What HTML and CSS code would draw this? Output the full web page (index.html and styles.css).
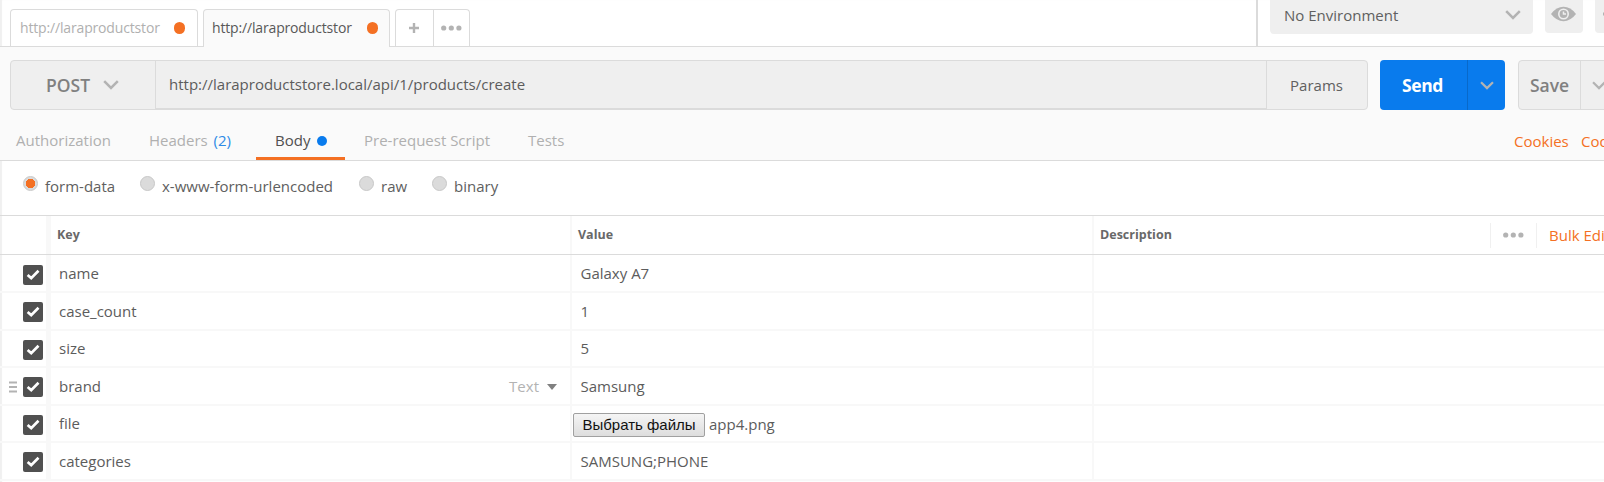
FILE: index.html
```html
<!DOCTYPE html>
<html lang="en">
<head>
<meta charset="utf-8">
<title>Request builder</title>
<link rel="stylesheet" href="styles.css">
</head>
<body>
<svg class="defs" width="0" height="0">
<symbol id="chev" viewBox="0 0 16 10"><path d="M1.200 1.200 8 8l6.800-6.800" fill="none" stroke="currentColor" stroke-width="2.500"/></symbol>
<symbol id="dots" viewBox="0 0 21 6"><g fill="currentColor"><circle cx="2.700" cy="3" r="2.600"/><circle cx="10.300" cy="3" r="2.600"/><circle cx="17.900" cy="3" r="2.600"/></g></symbol>
<symbol id="check" viewBox="0 0 20 20"><path d="M4.600 10 8.200 13.100 15.500 5.700" fill="none" stroke="#fff" stroke-width="2.700"/></symbol>
</svg>
<div class="app">
<header class="top">
  <div class="tabs">
    <div class="tab"><span class="tab-name">http://laraproductstor</span><i class="dot"></i></div>
    <div class="tab active"><span class="tab-name">http://laraproductstor</span><i class="dot"></i></div>
    <div class="tab-tools"><span class="tool"><svg width="10" height="10"><path d="M5 0v10M0 5h10" stroke="#b3b3b3" stroke-width="2.400"/></svg></span><span class="tool"><svg width="21" height="6"><use href="#dots"/></svg></span></div>
  </div>
  <div class="env">
    <div class="select"><span>No Environment</span><svg width="16" height="10"><use href="#chev"/></svg></div>
    <div class="square"><svg width="25" height="16" viewBox="0 0 25 16"><path d="M0 8Q5.500.8 12.500.8T25 8Q19.500 15.200 12.500 15.200T0 8Z" fill="#b3b3b3"/><circle cx="12.500" cy="8" r="4.700" fill="none" stroke="#efefef" stroke-width="1.600"/><path d="M12.500 5.500V8H15" fill="none" stroke="#efefef" stroke-width="1.500"/></svg></div>
    <div class="square cog"><svg width="18" height="18" viewBox="0 0 18 18"><circle cx="9" cy="9" r="5" fill="none" stroke="#b3b3b3" stroke-width="3"/><path d="M0 9h3M15 9h3M9 0v3M9 15v3" stroke="#b3b3b3" stroke-width="3"/></svg></div>
  </div>
</header>
<section class="request">
  <div class="bar">
    <div class="method"><b>POST</b><svg width="16" height="10"><use href="#chev"/></svg></div>
    <div class="url">http://laraproductstore.local/api/1/products/create</div>
    <div class="params">Params</div>
  </div>
  <div class="send"><b>Send</b><span class="drop"><svg width="14" height="9"><use href="#chev"/></svg></span></div>
  <div class="save"><b>Save</b><span class="drop"><svg width="14" height="9"><use href="#chev"/></svg></span></div>
</section>
<nav class="sections">
  <span class="sec auth">Authorization</span>
  <span class="sec headers">Headers <em>(2)</em></span>
  <span class="sec body">Body<i></i></span>
  <span class="sec script">Pre-request Script</span>
  <span class="sec tests">Tests</span>
  <span class="links"><a>Cookies</a><a>Code</a></span>
</nav>
<div class="modes">
  <label class="m1"><i class="on"></i><span>form-data</span></label>
  <label class="m2"><i></i><span>x-www-form-urlencoded</span></label>
  <label class="m3"><i></i><span>raw</span></label>
  <label class="m4"><i></i><span>binary</span></label>
</div>
<main class="table">
  <div class="row head">
    <div class="c0"></div><div class="key">Key</div><div class="val">Value</div>
    <div class="desc"><span class="dlabel">Description</span><span class="more"><svg width="21" height="6"><use href="#dots"/></svg></span><span class="bulk">Bulk Edit</span></div>
  </div>
  <div class="row tall first"><div class="c0"><svg class="box"><use href="#check"/></svg></div><div class="key">name</div><div class="val">Galaxy A7</div><div class="desc"></div></div>
  <div class="row tall"><div class="c0"><svg class="box"><use href="#check"/></svg></div><div class="key">case_count</div><div class="val">1</div><div class="desc"></div></div>
  <div class="row up"><div class="c0"><svg class="box"><use href="#check"/></svg></div><div class="key">size</div><div class="val">5</div><div class="desc"></div></div>
  <div class="row tall"><div class="c0"><svg class="grip" width="8" height="12"><path d="M0 1.500h8M0 6h8M0 10.500h8" stroke="#b3b3b3" stroke-width="2"/></svg><svg class="box"><use href="#check"/></svg></div><div class="key">brand<span class="type">Text<svg width="10" height="6"><path d="M0 0h10L5 6Z" fill="#808080"/></svg></span></div><div class="val">Samsung</div><div class="desc"></div></div>
  <div class="row up"><div class="c0"><svg class="box"><use href="#check"/></svg></div><div class="key">file</div><div class="val file"><span class="choose">Выбрать файлы</span><span>app4.png</span></div><div class="desc"></div></div>
  <div class="row tall"><div class="c0"><svg class="box"><use href="#check"/></svg></div><div class="key">categories</div><div class="val">SAMSUNG;PHONE</div><div class="desc"></div></div>
</main>
</div>
</body>
</html>
```
FILE: styles.css
```css
*{box-sizing:border-box}
body{margin:0;background:#fff;color:#5c5c5c;font:15px/20px "Open Sans","Noto Sans",sans-serif}
.defs{position:absolute}
svg{display:block;flex:none}
.app{width:1604px;height:482px;overflow:hidden;box-shadow:inset 2px 0 1px #f0f0f0}
.top{display:flex;height:47px;border-bottom:1px solid #dbdbdb}
.tabs{display:flex;width:1256px;padding:9px 0 0 10px;flex:none}
.tab{display:flex;align-items:center;width:188px;height:37px;margin-right:5px;padding:0 12px 0 9px;border:1px solid #dbdbdb;border-bottom:0;border-radius:4px 4px 0 0;color:#b0b0b0}
.tab.active{width:187px;height:38px;padding:0 11px 1px 8px;background:#fafafa;color:#585858}
.tab-name{white-space:nowrap;font-size:14px;letter-spacing:-.16px}
.dot{width:11px;height:12px;margin-left:auto;border-radius:6px;background:#f47023}
.tab-tools{display:flex;width:75px;height:37px;border:1px solid #dbdbdb;border-bottom:0;border-radius:4px 4px 0 0;color:#b3b3b3}
.tool{display:grid;place-items:center;width:36px}
.tool:first-child{width:38px;border-right:1px solid #dbdbdb}
.env{display:flex;width:348px;padding-left:12px;border-left:2px solid #dbdbdb;color:#b3b3b3}
.select{display:flex;align-items:center;justify-content:space-between;width:263px;height:34px;padding:0 12px 4px 14px;border-radius:0 0 4px 4px;background:#efefef;flex:none}
.select span{color:#606060}
.square{display:grid;place-items:center;width:38px;height:33px;margin-left:12px;padding:0 1px 5px 0;border-radius:0 0 4px 4px;background:#efefef;flex:none}
.cog{place-items:center start;padding-left:8px}
.request{display:flex;height:77px;padding:13px 0 0 10px;background:#fafafa}
.bar{display:flex;width:1358px;height:50px;border:1px solid #dbdbdb;border-radius:4px;background:#efefef;flex:none}
.bar b,.send b,.save b{font-size:17.500px;font-weight:600}
.method{display:flex;align-items:center;width:145px;padding:0 0 1px 35px;border-right:1px solid #dbdbdb;color:#808080}
.method svg{margin-left:13px;color:#b3b3b3}
.url{width:1111px;padding:13px;border-right:1px solid #dbdbdb;border-bottom:1px solid #dbdbdb}
.params{display:grid;place-items:center;flex:1;padding-right:1px;color:#606060}
.send,.save{display:flex;height:50px;margin-left:12px;border-radius:4px;background:#097bed;color:#fff;flex:none}
.send b{width:87px;padding-left:22px;line-height:50px;font-weight:700;letter-spacing:-.4px}
.send .drop{width:38px;border-left:1px solid #0869ca;color:#b3b3b3}
.drop{display:grid;place-items:center}
.save{width:100px;margin-left:13px;border:1px solid #dbdbdb;background:#efefef;color:#808080}
.save b{width:61px;padding-left:11px;line-height:49px}
.save .drop{width:37px;border-left:1px solid #dbdbdb;color:#b3b3b3}
.sections{display:flex;height:37px;border-bottom:1px solid #dbdbdb;background:#fafafa;color:#b0b0b0}
.sec{padding-top:6px;flex:none;white-space:nowrap}
.auth{width:149px;padding-left:16px}
.headers{width:107px}
.headers em{font-style:normal;color:#2e8ae6;margin-left:2px}
.body{display:flex;width:89px;height:36px;padding-left:19px;border-bottom:3px solid #f47023;color:#505050}
.body i{width:10px;height:10px;margin:6px 0 0 7px;border-radius:5px;background:#097bed}
.script{width:183px;padding-left:19px}
.links{display:flex;margin-left:949px;padding-top:7px;color:#f47023;flex:none}
.tests{width:37px}
.links a{width:67px}
.modes{display:flex;height:54px;padding:15px 0 0 23px;color:#606060}
.modes label{display:flex;flex:none}
.modes i{width:15px;height:15px;margin-right:7px;border:1px solid #c8c8c8;border-radius:50%;background:#dbdbdb}
.modes i.on{background:radial-gradient(circle,#f47023 4.500px,#dbdbdb 5px)}
.m1{width:117px}.m2{width:219px}.m3{width:73px}
.row{display:flex;height:37px}
.row.tall{height:38px}
.row>div{display:flex;align-items:center;border-bottom:2px solid #f8f8f8;flex:none}
.row .c0{width:51px;padding:9px 3px 0 0;border-right:5px solid #f8f8f8;justify-content:flex-end;align-items:flex-start}
.first .c0{padding-top:10px}
.box{width:20px;height:20px;border-radius:2px;background:#505050}
.grip{margin:4px 6px 0 0}
.row .key{width:521px;padding-left:8px;border-right:2px solid #f8f8f8}
.row .val{width:522px;padding-left:8.500px;border-right:2px solid #f8f8f8}
.row.up .key,.row.up .val{padding-bottom:1px}
.row .desc{width:510px}
.row.head{height:40px;border:1px solid #dbdbdb;border-width:1px 0}
.row.head>div{border-bottom:0}
.head .key,.head .val,.dlabel{font-size:12.500px;font-weight:700;color:#686868}
.row.head .key,.row.head .val{padding-left:6px}
.dlabel{width:396px;padding-left:6px;flex:none}
.more{display:grid;place-items:center;width:47px;height:25px;border:1px solid #f0f0f0;border-width:0 1px;color:#b3b3b3;flex:none}
.bulk{padding-left:12px;color:#f47023;white-space:nowrap}
.type{display:flex;align-items:center;margin-left:auto;padding-right:13px;color:#b3b3b3}
.type svg{margin:1px 0 0 8px}
.row.up .file{align-items:flex-start;padding:7px 0 0 1px}
.file span:last-child{padding-top:1px}
.choose{width:132px;height:24px;margin-right:4px;border:1px solid #a0a0a0;border-radius:2px;background:linear-gradient(#f5f5f5,#ddd);color:#111;text-align:center;font:15px/21px "Liberation Sans",sans-serif}
```
